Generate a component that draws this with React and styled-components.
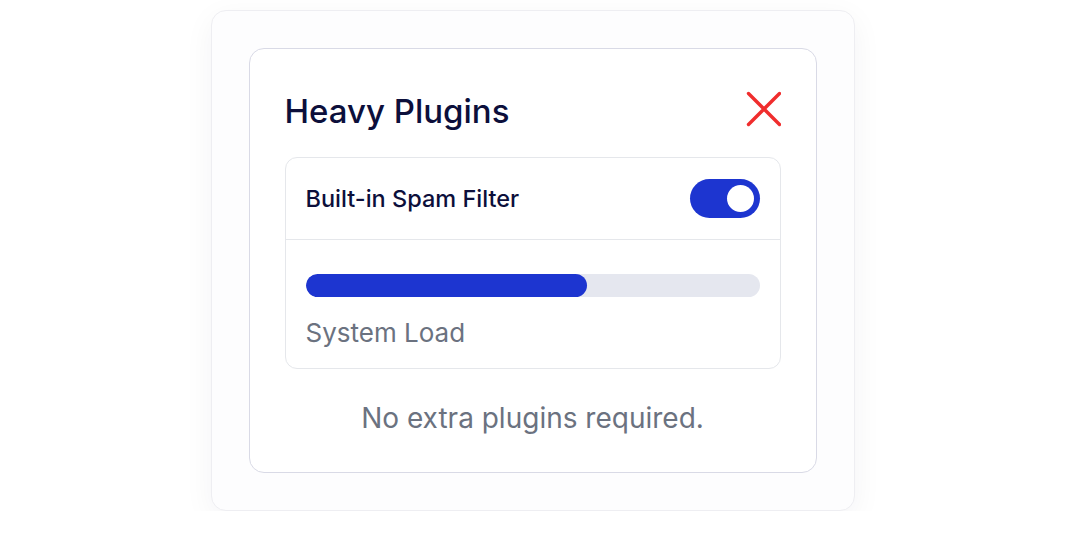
import React from "react";
import styled, { createGlobalStyle } from "styled-components";

const GlobalStyle = createGlobalStyle`
  html, body {
    margin: 0;
    padding: 0;
    background: #ffffff;
    font-family: Inter, "Noto Sans", sans-serif;
  }
`;

const Page = styled.div`
  display: flex;
  justify-content: center;
  padding-top: 10px;
`;

const Shell = styled.div`
  width: 644px;
  box-sizing: border-box;
  padding: 37px;
  background: #fdfdfe;
  border: 1px solid #eeeef2;
  border-radius: 15px;
  box-shadow: 0 8px 30px rgba(20, 20, 50, 0.05);
`;

const Card = styled.div`
  box-sizing: border-box;
  padding: 36px 35px 38px;
  background: #ffffff;
  border: 1px solid #d9dae6;
  border-radius: 15px;
`;

const Header = styled.div`
  display: flex;
  align-items: center;
  justify-content: space-between;
  height: 52px;
  margin-bottom: 20px;
`;

const Title = styled.h2`
  margin: 0;
  font-size: 33px;
  font-weight: 500;
  color: #0c0f3b;
`;

const CloseButton = styled.button`
  display: flex;
  padding: 0;
  border: 0;
  background: transparent;
  cursor: pointer;
  margin-top: -4px;
`;

const Box = styled.div`
  border: 1px solid #e5e7eb;
  border-radius: 12px;
  overflow: hidden;
`;

const Row = styled.div`
  display: flex;
  align-items: center;
  justify-content: space-between;
  height: 81px;
  padding: 0 20px;
  border-bottom: 1px solid #e5e7eb;
`;

const RowLabel = styled.span`
  font-size: 23.5px;
  font-weight: 500;
  color: #0c0f3b;
`;

const Toggle = styled.div`
  width: 70px;
  height: 39px;
  box-sizing: border-box;
  border-radius: 20px;
  background: ${(p) => (p.$on ? "#1d35d0" : "#d1d5db")};
  display: flex;
  align-items: center;
  justify-content: ${(p) => (p.$on ? "flex-end" : "flex-start")};
  padding: 0 6px;
`;

const Knob = styled.div`
  width: 27px;
  height: 27px;
  border-radius: 50%;
  background: #ffffff;
`;

const LoadSection = styled.div`
  padding: 34px 20px 20px;
`;

const Track = styled.div`
  height: 23px;
  border-radius: 12px;
  background: #e5e7ef;
  overflow: hidden;
`;

const Fill = styled.div`
  height: 100%;
  border-radius: 12px;
  background: #1d35d0;
`;

const LoadLabel = styled.div`
  margin-top: 21px;
  font-size: 26px;
  color: #6b7280;
  line-height: 30px;
`;

const Footer = styled.p`
  margin: 33px 0 0;
  text-align: center;
  font-size: 28px;
  line-height: 32px;
  color: #6b7280;
`;

const CloseIcon = () => (
  <svg width="36" height="36" viewBox="0 0 36 36">
    <path
      d="M3.5 2.5 L34.5 33.5 M34.5 2.5 L3.5 33.5"
      stroke="#f02d2d"
      strokeWidth="3.4"
      strokeLinecap="round"
    />
  </svg>
);

export default function App() {
  const load = 62;
  return (
    <>
      <GlobalStyle />
      <Page>
        <Shell>
          <Card>
            <Header>
              <Title>Heavy Plugins</Title>
              <CloseButton aria-label="Close">
                <CloseIcon />
              </CloseButton>
            </Header>
            <Box>
              <Row>
                <RowLabel>Built-in Spam Filter</RowLabel>
                <Toggle $on>
                  <Knob />
                </Toggle>
              </Row>
              <LoadSection>
                <Track>
                  <Fill style={{ width: `${load}%` }} />
                </Track>
                <LoadLabel>System Load</LoadLabel>
              </LoadSection>
            </Box>
            <Footer>No extra plugins required.</Footer>
          </Card>
        </Shell>
      </Page>
    </>
  );
}
